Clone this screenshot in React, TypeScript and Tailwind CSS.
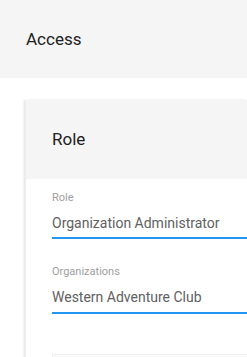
export default function App() {
    return (
        <div className="h-[357px] bg-white font-['Roboto',sans-serif] overflow-hidden">
            <div className="h-[78px] bg-[#f5f5f5] pl-[26px] flex items-center">
                <h1 className="text-[17px] text-[#212121] leading-none">Access</h1>
            </div>
            <div className="pt-[22px] pl-[25px]">
                <div className="bg-white shadow-[-1px_0_2px_rgba(0,0,0,0.12)] border-l border-[#eeeeee]">
                    <div className="h-[79px] bg-[#f5f5f5] pl-[26px] flex items-center">
                        <h2 className="text-[17px] text-[#212121] leading-none">Role</h2>
                    </div>
                    <div className="pl-[26px] pt-[12px]">
                        <div className="flex flex-col border-b-2 border-[#2196f3]">
                            <label className="text-[11px] text-[#9e9e9e] leading-[14px]">Role</label>
                            <div className="text-[14px] text-[#616161] leading-[20px] mt-[8px] mb-[4px] whitespace-nowrap">Organization Administrator</div>
                        </div>
                        <div className="flex flex-col border-b-2 border-[#2196f3] mt-[26px]">
                            <label className="text-[11px] text-[#9e9e9e] leading-[14px]">Organizations</label>
                            <div className="text-[14px] text-[#616161] leading-[20px] mt-[8px] mb-[5px] whitespace-nowrap">Western Adventure Club</div>
                        </div>
                        <div className="mt-[40px] h-[20px] bg-[#fafafa] border-t border-l border-[#eeeeee]"></div>
                    </div>
                </div>
            </div>
        </div>
    )
}
